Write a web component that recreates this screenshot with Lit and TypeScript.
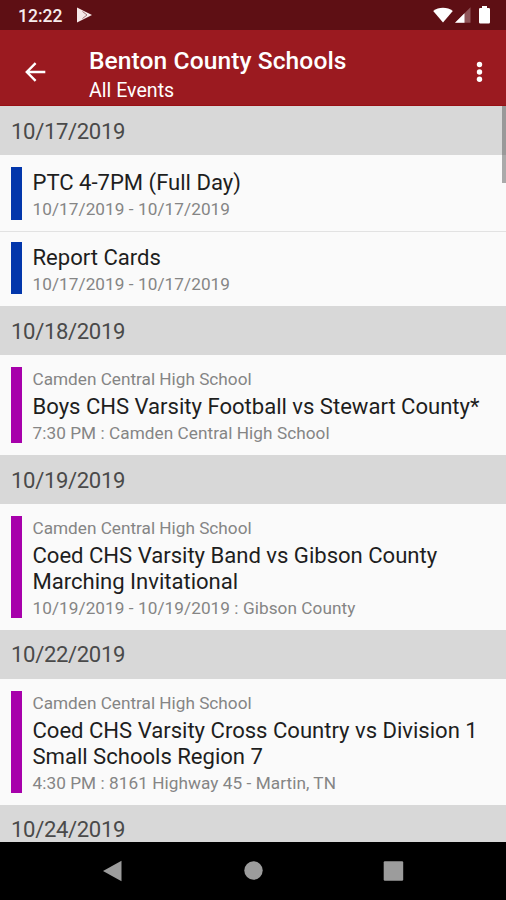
import { LitElement, html, css } from "lit";
import { customElement, property } from "lit/decorators.js";

interface SchoolEvent {
  title: string;
  detail: string;
  school?: string;
}

interface Day {
  date: string;
  events: SchoolEvent[];
}

const CAMDEN = "Camden Central High School";

const DAYS: Day[] = [
  {
    date: "10/17/2019",
    events: [
      { title: "PTC 4-7PM (Full Day)", detail: "10/17/2019 - 10/17/2019" },
      { title: "Report Cards", detail: "10/17/2019 - 10/17/2019" },
    ],
  },
  {
    date: "10/18/2019",
    events: [
      { school: CAMDEN, title: "Boys CHS Varsity Football vs Stewart County*", detail: "7:30 PM : Camden Central High School" },
    ],
  },
  {
    date: "10/19/2019",
    events: [
      { school: CAMDEN, title: "Coed CHS Varsity Band vs Gibson County Marching Invitational", detail: "10/19/2019 - 10/19/2019 : Gibson County" },
    ],
  },
  {
    date: "10/22/2019",
    events: [
      { school: CAMDEN, title: "Coed CHS Varsity Cross Country vs Division 1 Small Schools Region 7", detail: "4:30 PM : 8161 Highway 45 - Martin, TN" },
    ],
  },
  { date: "10/24/2019", events: [] },
];

@customElement("status-bar")
export class StatusBar extends LitElement {
  static styles = css`
    :host {
      display: flex;
      align-items: center;
      flex: none;
      height: 30px;
      padding: 0 16px 0 18px;
      box-sizing: border-box;
      background: #5e0f14;
      color: #f6ecec;
    }
    .time {
      width: 58px;
      font-size: 17.5px;
      font-weight: 500;
      line-height: 30px;
      padding-top: 2px;
    }
    .spacer { flex: 1; }
    svg { display: block; flex: none; }
    .signal { margin-left: 2px; }
    .battery { margin-left: 8px; }
  `;

  render() {
    return html`
      <span class="time">12:22</span>
      <svg width="17" height="16" viewBox="0 0 17 16">
        <path d="M1 .5 16 8 1 15.500z" fill="#f6e9e9" />
        <path d="M6.500 4.500 11 8 6.500 11.500" fill="none" stroke="#a07577" stroke-width="1" />
      </svg>
      <span class="spacer"></span>
      <svg width="20" height="16" viewBox="0 0 20 16">
        <path d="M.2 4C5.500-.4 14.500-.4 19.800 4L10 15.600z" fill="#fff" />
      </svg>
      <svg class="signal" width="16" height="16" viewBox="0 0 16 16">
        <path d="M15.500.3V15.700H0z" fill="#8f5559" />
        <path d="M9.500 6.300V15.700H0z" fill="#fff" />
      </svg>
      <svg class="battery" width="11" height="18" viewBox="0 0 11 18">
        <path d="M3 0H8V2H9.800Q11 2 11 3.200V16.300Q11 17.500 9.800 17.500H1.200Q0 17.500 0 16.300V3.200Q0 2 1.200 2H3z" fill="#fff" />
      </svg>
    `;
  }
}

@customElement("title-bar")
export class TitleBar extends LitElement {
  static styles = css`
    :host {
      display: flex;
      align-items: center;
      flex: none;
      height: 76px;
      padding: 0 20px 0 24px;
      box-sizing: border-box;
      background: #9b1a20;
      border-bottom: 1px solid #980f14;
      color: #fff;
    }
    svg { display: block; flex: none; margin-top: 9px; }
    .titles {
      flex: 1;
      margin-left: 43px;
      padding-top: 14px;
    }
    .name {
      font-size: 24.6px;
      font-weight: 500;
      letter-spacing: 0.07px;
      line-height: 31px;
      white-space: nowrap;
    }
    .sub {
      font-size: 19.6px;
      line-height: 29px;
    }
  `;

  render() {
    return html`
      <svg width="22" height="20" viewBox="0 0 22 20">
        <path d="M21.300 10H3M11.600 1.200 2.800 10l8.800 8.800" fill="none" stroke="#fff" stroke-width="2.400" />
      </svg>
      <div class="titles">
        <div class="name">Benton County Schools</div>
        <div class="sub">All Events</div>
      </div>
      <svg width="13" height="22" viewBox="0 0 13 22" fill="#fff">
        <circle cx="6.500" cy="3.500" r="2.700" />
        <circle cx="6.500" cy="11" r="2.700" />
        <circle cx="6.500" cy="18.300" r="2.700" />
      </svg>
    `;
  }
}

@customElement("event-row")
export class EventRow extends LitElement {
  @property({ attribute: false }) event!: SchoolEvent;

  static styles = css`
    :host {
      display: flex;
      padding: 11.800px 20px 11.600px 10.700px;
      background: #fafafa;
    }
    .stripe {
      width: 11.600px;
      flex: none;
      background: #0236ab;
    }
    .stripe.sport { background: #a700ab; }
    .body {
      flex: 1;
      min-width: 0;
      margin-left: 10.200px;
      padding-bottom: 2.400px;
    }
    .school, .detail {
      font-size: 17.200px;
      height: 22px;
      color: #858585;
      white-space: nowrap;
    }
    .school { padding-top: 1.100px; line-height: 22px; }
    .detail { line-height: 28.500px; letter-spacing: 0.06px; }
    .title {
      font-size: 22.100px;
      letter-spacing: -0.02px;
      line-height: 26px;
      color: #1e1e1e;
      padding-top: 2.400px;
    }
    .school + .title { padding-top: 2.800px; }
  `;

  render() {
    const e = this.event;
    return html`
      <div class="stripe ${e.school ? "sport" : ""}"></div>
      <div class="body">
        ${e.school ? html`<div class="school">${e.school}</div>` : ""}
        <div class="title">${e.title}</div>
        <div class="detail">${e.detail}</div>
      </div>
    `;
  }
}

@customElement("nav-bar")
export class NavBar extends LitElement {
  static styles = css`
    :host {
      display: flex;
      justify-content: space-between;
      align-items: center;
      flex: none;
      height: 58px;
      padding: 0 102px;
      box-sizing: border-box;
      background: #000;
    }
    svg { display: block; fill: #9c9c9c; }
  `;

  render() {
    return html`
      <svg width="20" height="22" viewBox="0 0 20 22"><path d="M19.500.8V21.200L1 11z" /></svg>
      <svg width="20" height="20" viewBox="0 0 20 20"><circle cx="10.500" cy="9.500" r="9.200" /></svg>
      <svg width="21" height="20" viewBox="0 0 21 20"><rect x=".7" y=".3" width="19.500" height="19.500" rx="1.200" /></svg>
    `;
  }
}

@customElement("app-root")
export class AppRoot extends LitElement {
  static styles = css`
    :host {
      display: flex;
      flex-direction: column;
      height: 900px;
      font-family: Roboto, "Liberation Sans", sans-serif;
      background: #fafafa;
    }
    .list {
      position: relative;
      flex: 1;
      min-height: 0;
      overflow: hidden;
    }
    .date {
      height: 49.200px;
      padding: 14.700px 0 0 11px;
      box-sizing: border-box;
      background: #d8d8d8;
      color: #4a4a4a;
      font-size: 22.100px;
      letter-spacing: -0.35px;
      line-height: 21px;
    }
    event-row + event-row { border-top: 1.500px solid #e2e2e2; padding-top: 9.300px; }
    .thumb {
      position: absolute;
      top: 0;
      right: 0;
      width: 4.500px;
      height: 77px;
      background: rgba(90, 90, 90, 0.5);
    }
  `;

  render() {
    return html`
      <status-bar></status-bar>
      <title-bar></title-bar>
      <div class="list">
        ${DAYS.map(
          (day) => html`
            <div class="date">${day.date}</div>
            ${day.events.map((e) => html`<event-row .event=${e}></event-row>`)}
          `
        )}
        <div class="thumb"></div>
      </div>
      <nav-bar></nav-bar>
    `;
  }
}
